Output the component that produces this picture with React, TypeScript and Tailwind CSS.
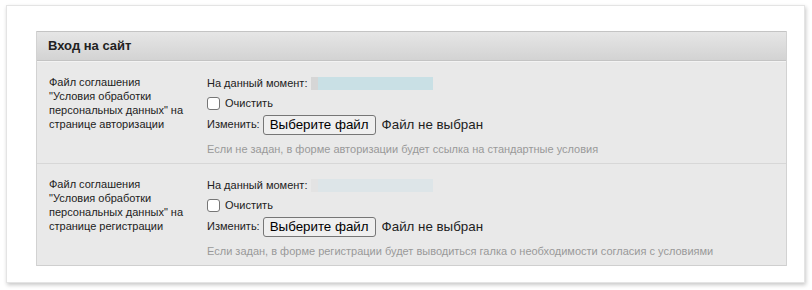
import React from "react";

type Row = {
    label: string[];
    hint: string;
    bar: string;
    barLead: string;
};

const rows: Row[] = [
    {
        label: ["Файл соглашения", "\"Условия обработки", "персональных данных\" на", "странице авторизации"],
        hint: "Если не задан, в форме авторизации будет ссылка на стандартные условия",
        bar: "bg-[#c9e0e5]",
        barLead: "bg-[#d6d6d6]",
    },
    {
        label: ["Файл соглашения", "\"Условия обработки", "персональных данных\" на", "странице регистрации"],
        hint: "Если задан, в форме регистрации будет выводиться галка о необходимости согласия с условиями",
        bar: "bg-[#dde5e8]",
        barLead: "bg-[#e3e3e3]",
    },
];

function FileRow({ row, last }: { row: Row; last: boolean }) {
    return (
        <div
            className={
                "flex bg-[#e9e9e9] pt-[12px] pb-[7px] " +
                (last ? "border-b border-[#cfcfcf]" : "border-b border-[#d7d7d7] shadow-[0_1px_0_#f7f7f7]")
            }
        >
            <div className="w-[170px] pl-[12px] text-[11px] leading-[14px] text-[#222] pt-[1px]">
                {row.label.map((l) => (
                    <div key={l}>{l}</div>
                ))}
            </div>
            <div className="flex flex-col text-[11px] text-[#222]">
                <div className="flex items-center h-[14px] mt-[2px]">
                    <span>На данный момент:</span>
                    <span className={"ml-[4px] h-[13px] w-[7px] " + row.barLead} />
                    <span className={"h-[13px] w-[115px] " + row.bar} />
                </div>
                <label className="flex items-center mt-[6px] h-[14px]">
                    <span className="w-[13px] h-[13px] rounded-[3px] border border-[#767676] bg-white" />
                    <span className="ml-[5px]">Очистить</span>
                </label>
                <div className="flex items-center mt-[4px] h-[21px]">
                    <span>Изменить:</span>
                    <span className="ml-[3px] h-[20px] px-[6px] flex items-center border border-[#767676] rounded-[3px] bg-[#efefef] text-[13.33px] text-black">
                        Выберите файл
                    </span>
                    <span className="ml-[6px] text-[13.33px] text-[#222]">Файл не выбран</span>
                </div>
                <div className="mt-[7px] text-[#999] leading-[14px]">{row.hint}</div>
            </div>
        </div>
    );
}

export default function App() {
    return (
        <div className="w-[812px] h-[290px] bg-white pt-[5px] pl-[6px] font-['Liberation_Sans',Arial,sans-serif]">
            <div className="w-[799px] h-[278px] bg-white border border-[#e4e4e4] shadow-[1px_2px_4px_rgba(0,0,0,0.22)] pt-[25px] pl-[29px]">
                <div className="w-[751px] border-l border-r border-[#d2d2d2]">
                    <div className="h-[30px] flex items-center pl-[11px] border-t border-[#c4c4c4] border-b border-[#bdbdbd] bg-gradient-to-b from-[#e6e6e6] to-[#d3d3d3] text-[13px] font-bold text-[#222]">
                        Вход на сайт
                    </div>
                    <div className="border-t border-[#f3f3f3]">
                        {rows.map((r, i) => (
                            <FileRow key={i} row={r} last={i === rows.length - 1} />
                        ))}
                    </div>
                </div>
            </div>
        </div>
    );
}
